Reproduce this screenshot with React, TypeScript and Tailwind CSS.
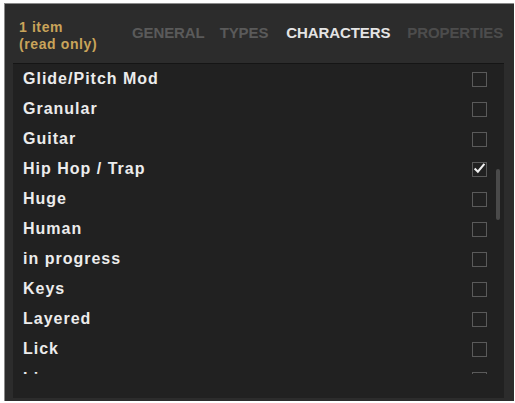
import React from "react";

const items = [
  { name: "Glide/Pitch Mod", checked: false },
  { name: "Granular", checked: false },
  { name: "Guitar", checked: false },
  { name: "Hip Hop / Trap", checked: true },
  { name: "Huge", checked: false },
  { name: "Human", checked: false },
  { name: "in progress", checked: false },
  { name: "Keys", checked: false },
  { name: "Layered", checked: false },
  { name: "Lick", checked: false },
  { name: "Live", checked: false },
];

function CheckBox({ checked }: { checked: boolean }) {
  return (
    <div className="w-[15px] h-[15px] border border-[#5a5a5a] flex items-center justify-center">
      {checked && (
        <svg width="16" height="14" viewBox="0 0 16 14" className="-mt-[2px]">
          <path d="M2 7.5 L6 11.5 L14 2" fill="none" stroke="#f0f0f0" strokeWidth="2.6" />
        </svg>
      )}
    </div>
  );
}

export default function App() {
  return (
    <div className="w-[515px] h-[403px] bg-white pt-[3px] pl-[4px] pr-[1px] pb-[2px] font-['Liberation_Sans',Arial,sans-serif]">
      <div className="h-full bg-[#2c2c2c] border-t border-l border-[#8a8a8a] flex flex-col">
        <div className="h-[59px] flex items-center pl-[14px] pr-[4px] pt-[4px]">
          <div className="text-[14px] font-bold leading-[17px] tracking-[0.6px] text-[#c9a45a] w-[113px]">
            <div>1 item</div>
            <div>(read only)</div>
          </div>
          <div className="flex items-center text-[15px] font-bold tracking-[-0.1px] -mt-[4px]">
            <span className="text-[#5a5a5a]">GENERAL</span>
            <span className="ml-[15px] text-[#5a5a5a]">TYPES</span>
            <span className="ml-[18px] text-[#e4e4e4]">CHARACTERS</span>
            <span className="ml-[17px] text-[#4c4c4c]">PROPERTIES</span>
          </div>
        </div>
        <div className="ml-[8px] mr-[10px] mb-[3px] flex-1 bg-[#212121] border-t border-[#151515] flex relative">
          <div className="flex-1 h-[310px] overflow-hidden">
            {items.map((it) => (
              <div key={it.name} className="h-[30px] flex items-center pl-[10px] pr-[17px] justify-between">
                <span className="text-[16px] font-bold tracking-[1px] text-[#ececec]">{it.name}</span>
                <CheckBox checked={it.checked} />
              </div>
            ))}
          </div>
          <div className="absolute right-[4px] top-[105px] w-[4px] h-[51px] bg-[#4a4a4a] rounded-sm" />
        </div>
      </div>
    </div>
  );
}
